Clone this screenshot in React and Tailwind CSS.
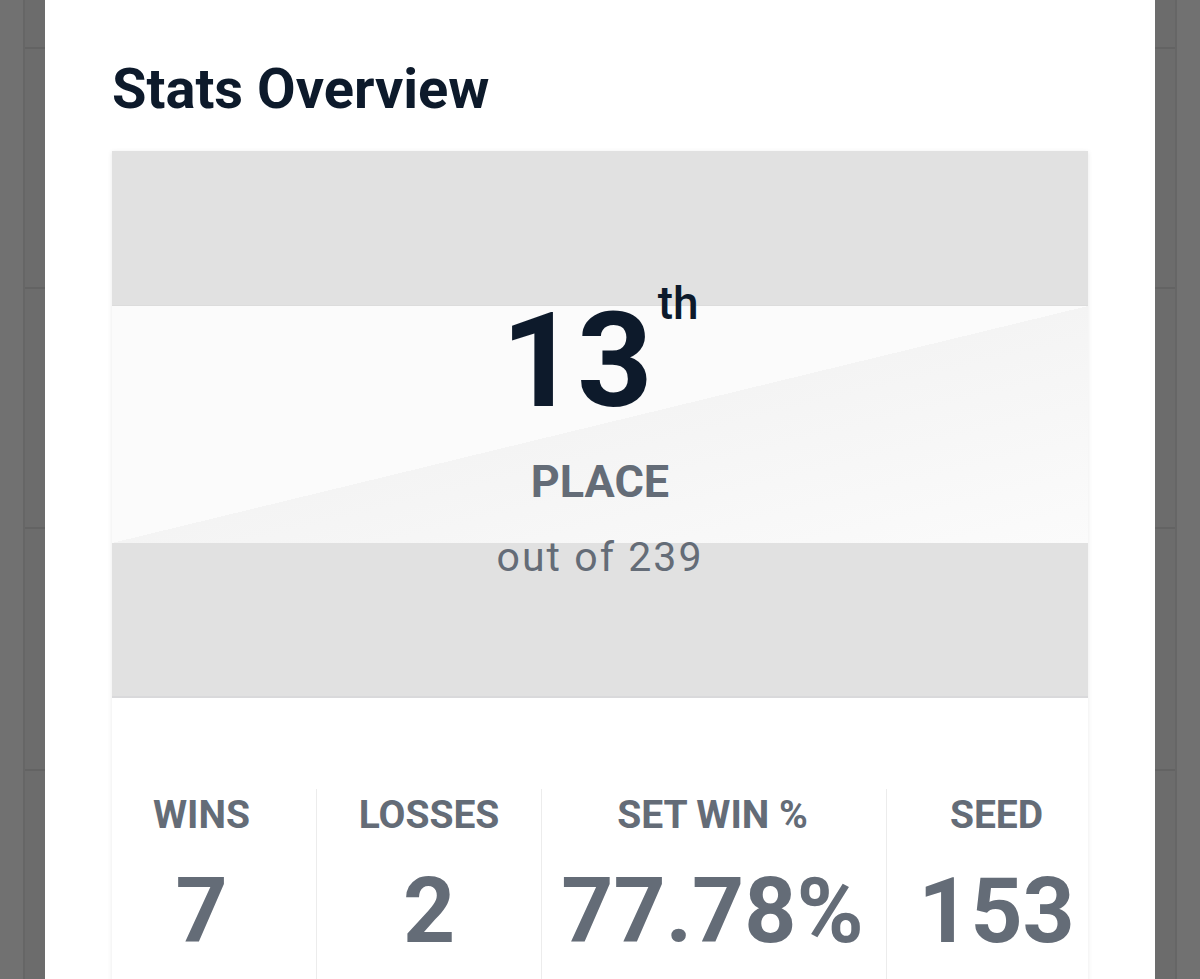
import React from 'react';

const stats = [
  { label: 'WINS', value: '7', width: 'w-[204px] pr-[25px]' },
  { label: 'LOSSES', value: '2', width: 'w-[225px]' },
  { label: 'SET WIN %', value: '77.78%', width: 'w-[345px] pr-[3px]' },
  { label: 'SEED', value: '153', width: 'flex-1 pl-[18px]' },
];

const SideRows = () => (
  <div className="flex flex-col">
    <div className="h-[49px] shrink-0 border-b-2 border-[#636363]" />
    <div className="h-[240px] shrink-0 border-b-2 border-[#636363]" />
    <div className="h-[240px] shrink-0 border-b-2 border-[#636363]" />
    <div className="h-[242px] shrink-0 border-b-2 border-[#636363]" />
    <div className="h-[240px] shrink-0" />
  </div>
);

const App = () => {
  return (
    <div
      className="flex h-[979px] w-full overflow-hidden bg-[#717171]"
      style={{ fontFamily: 'Roboto, "Noto Sans", sans-serif' }}
    >
      {/* Left backdrop strip */}
      <div className="flex w-[45px] shrink-0">
        <div className="w-[23px] bg-[#717171]" />
        <div className="w-[2px] bg-[#666666]" />
        <div className="flex-1 overflow-hidden bg-[#6c6c6c]">
          <SideRows />
        </div>
      </div>

      {/* Modal */}
      <div className="w-[1110px] shrink-0 bg-white px-[67px] pt-[61px]">
        <h2 className="text-[56px] font-bold leading-none text-[#0d1a2b]">Stats Overview</h2>

        <div className="mt-[34px] bg-white shadow-[0_1px_5px_rgba(0,0,0,0.09)]">
          {/* Placement banner */}
          <div className="relative">
            <div className="h-[154px] bg-[#e1e1e1]" />
            <div className="h-[238px] border-t border-[#dcdcdc] bg-[linear-gradient(to_bottom_right,#fbfbfb_50%,#f4f4f4_50%,#fbfbfb_100%)]" />
            <div className="h-[155px] border-b-2 border-[#d9d9db] bg-[#e1e1e1]" />

            <div className="absolute inset-0 flex flex-col items-center pt-[132px]">
              <div className="flex items-start text-[#0d1a2b]">
                <span className="mt-[12px] text-[132px] font-bold leading-none">13</span>
                <span className="-mt-[3px] ml-[5px] text-[46px] font-medium leading-none">th</span>
              </div>
              <div className="mt-[32px] text-[45px] font-bold leading-none text-[#646c77]">PLACE</div>
              <div className="mt-[33px] text-[41px] leading-none tracking-[0.05em] text-[#646c77]">
                out of 239
              </div>
            </div>
          </div>

          {/* Stat columns */}
          <div className="flex pt-[91px]">
            {stats.map((s, i) => (
              <div
                key={s.label}
                className={`${s.width} flex h-[200px] flex-col items-center pt-[7px] ${
                  i > 0 ? 'border-l border-[#ececec]' : ''
                }`}
              >
                <div className="text-[39px] font-bold leading-none text-[#646c77]">{s.label}</div>
                <div className="mt-[31px] text-[91px] font-bold leading-none text-[#646c77]">{s.value}</div>
              </div>
            ))}
          </div>
        </div>
      </div>

      {/* Right backdrop strip */}
      <div className="flex w-[45px] shrink-0">
        <div className="w-[20px] overflow-hidden bg-[#6c6c6c]">
          <SideRows />
        </div>
        <div className="w-[2px] bg-[#666666]" />
        <div className="flex-1 bg-[#717171]" />
      </div>
    </div>
  );
};

export default App;
